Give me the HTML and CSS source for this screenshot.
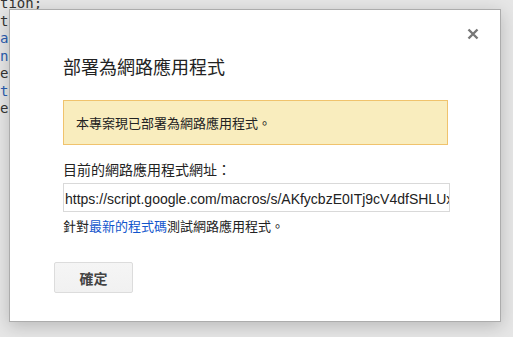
FILE: index.html
```html
<!DOCTYPE html>
<html lang="zh-TW">
<head>
    <meta charset="UTF-8">
    <title>部署為網路應用程式</title>
    <link rel="stylesheet" href="styles.css">
</head>
<body>
    <div class="editor">
        <div class="code-line first">tion;</div>
        <div class="code-line">t</div>
        <div class="code-line kw">a</div>
        <div class="code-line kw">n</div>
        <div class="code-line">e</div>
        <div class="code-line kw">t</div>
        <div class="code-line">e</div>
    </div>

    <div class="dialog">
        <button class="close" title="關閉">
            <svg width="12" height="12" viewBox="0 0 12 12">
                <path d="M1.5 1.5 L10.5 10.5 M10.5 1.5 L1.5 10.5" stroke="#777" stroke-width="2.4" fill="none"/>
            </svg>
        </button>

        <h2 class="title">部署為網路應用程式</h2>

        <div class="notice">本專案現已部署為網路應用程式。</div>

        <div class="label">目前的網路應用程式網址：</div>
        <input class="url" type="text" readonly value="https://script.google.com/macros/s/AKfycbzE0ITj9cV4dfSHLUxq3m/exec">

        <div class="hint">針對<a href="#">最新的程式碼</a>測試網路應用程式。</div>

        <button class="ok">確定</button>
    </div>
</body>
</html>
```

FILE: styles.css
```css
body {
    margin: 0;
    background: #e6e6e6;
    font-family: "Liberation Sans", "Noto Sans CJK TC", sans-serif;
    overflow: hidden;
}

/* 後面的程式碼編輯器 */
.editor {
    font-family: "DejaVu Sans Mono", monospace;
    font-size: 14px;
    line-height: 17.5px;
    color: #333;
}

.code-line {
    height: 17.5px;
}

.code-line.first {
    margin-top: -5px;
}

.code-line.kw {
    color: #2a5db0;
}

/* 對話框 */
.dialog {
    position: absolute;
    left: 9px;
    top: 9px;
    width: 492px;
    height: 313px;
    box-sizing: border-box;
    background: white;
    border: 1px solid #acacac;
    box-shadow: 0 4px 16px rgba(0,0,0,0.2);
    padding: 46px 0 0 53px;
    color: #222;
}

.close {
    position: absolute;
    top: 18px;
    right: 21px;
    border: none;
    background: none;
    padding: 0;
    width: 12px;
    height: 12px;
    cursor: pointer;
}

.close svg {
    display: block;
}

.title {
    margin: 0;
    font-size: 18px;
    font-weight: normal;
    line-height: 24px;
    color: #222;
}

.notice {
    margin-top: 20px;
    width: 385px;
    box-sizing: border-box;
    background: #f9edbe;
    border: 1px solid #f0c36d;
    padding: 14px 12px 12px;
    font-size: 13px;
    line-height: 17px;
}

.label {
    margin-top: 16px;
    font-size: 14px;
    line-height: 18px;
}

.url {
    display: block;
    margin: 4px 0 0;
    width: 387px;
    height: 29px;
    box-sizing: border-box;
    border: 1px solid #d9d9d9;
    padding: 2px 0 0 1px;
    font-family: "Liberation Sans", sans-serif;
    font-size: 14px;
    color: #222;
    outline: none;
}

.hint {
    margin-top: 6px;
    font-size: 13px;
    line-height: 18px;
}

.hint a {
    color: #15c;
    text-decoration: none;
}

.ok {
    display: block;
    margin: 26px 0 0 -9px;
    width: 79px;
    height: 31px;
    background: linear-gradient(#f5f5f5, #f1f1f1);
    border: 1px solid #dcdcdc;
    border-radius: 2px;
    font-family: "Liberation Sans", "Noto Sans CJK TC", sans-serif;
    font-size: 14px;
    font-weight: bold;
    color: #444;
}
```
